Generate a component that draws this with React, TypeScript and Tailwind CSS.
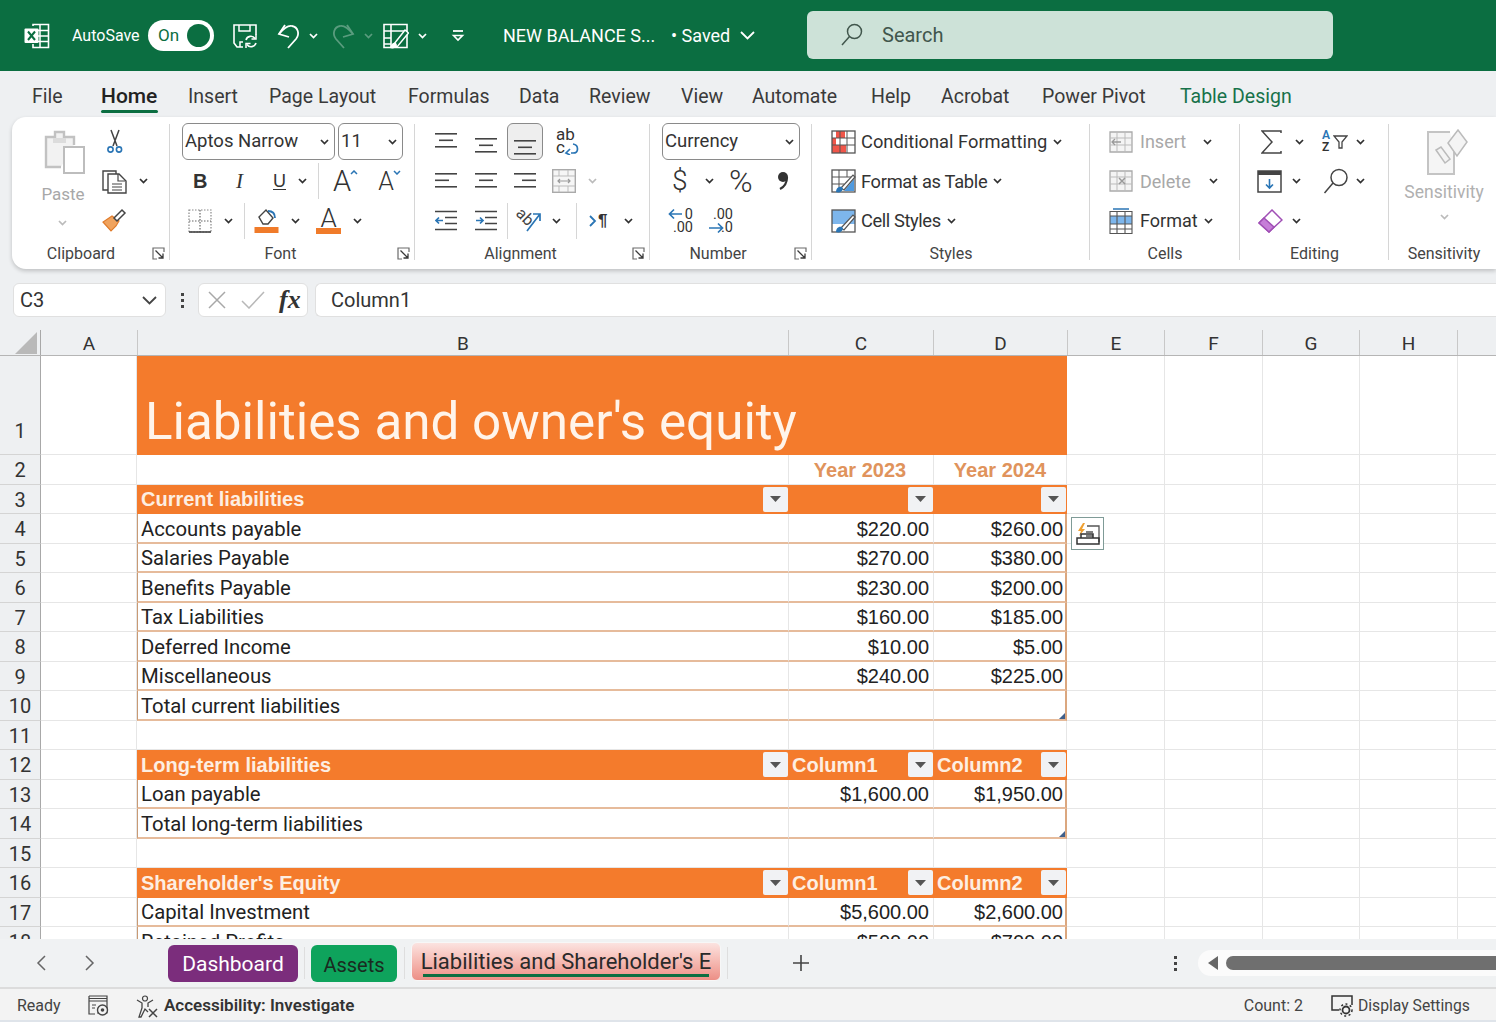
import React from "react";

type IconProps = { w: number; h: number; className?: string; children?: React.ReactNode };

const Ico = ({ w, h, className, children }: IconProps) => (
  <svg width={w} height={h} viewBox={`0 0 ${w} ${h}`} fill="none" className={`shrink-0 ${className ?? ""}`}>
    {children}
  </svg>
);

const Chev = ({ className, color = "#303030", w = 9 }: { className?: string; color?: string; w?: number }) => (
  <Ico w={w} h={6} className={className}>
    <path d={`M1 1 L${w / 2} 4.6 L${w - 1} 1`} stroke={color} strokeWidth="1.7" />
  </Ico>
);

const Launcher = ({ className }: { className?: string }) => (
  <Ico w={13} h={13} className={className}>
    <path d="M12 5V1H1v11h4" stroke="#6a6a6a" strokeWidth="1.2" />
    <path d="M3.5 3.5L11 11M11 6.5V11H6.5" stroke="#3a3a3a" strokeWidth="1.3" />
  </Ico>
);

const Lines = ({ widths }: { widths: number[][] }) => (
  <Ico w={23} h={16}>
    {widths.map(([x, w], i) => (
      <rect key={i} x={x} y={i * 6.5} width={w} height="1.6" fill="#444" />
    ))}
  </Ico>
);

const Group = ({ w, label, labelPad, launcher, children }: { w: string; label: string; labelPad?: string; launcher?: boolean; children: React.ReactNode }) => (
  <div className={`relative flex h-full shrink-0 flex-col ${w}`}>
    <div className="flex-1 pt-[5px]">{children}</div>
    <div className={`flex h-[29px] items-center justify-center pb-[2px] text-[16px] text-[#444] ${labelPad ?? ""}`}>{label}</div>
    {launcher && <Launcher className="absolute bottom-[9px] right-[5px]" />}
    <div className="absolute right-0 top-[7px] h-[136px] w-px bg-[#d6d6d6]" />
  </div>
);

const RRow = ({ className, children }: { className?: string; children: React.ReactNode }) => (
  <div className={`flex h-[39.5px] items-center ${className ?? ""}`}>{children}</div>
);

const Select = ({ className, children }: { className: string; children: React.ReactNode }) => (
  <div className={`flex h-[37px] items-center justify-between rounded-md border border-[#8a8a8a] bg-white pl-[2px] pr-[5px] text-[18.5px] text-[#333] ${className}`}>
    <span className="pt-[1px]">{children}</span>
    <Chev w={9} color="#333" />
  </div>
);

const VSep = ({ className }: { className?: string }) => <div className={`h-[36px] w-px bg-[#d6d6d6] ${className ?? ""}`} />;

const TitleBar = () => (
  <div className="flex h-[71px] shrink-0 items-center bg-[#0b6e41] text-white">
    <Ico w={26} h={26} className="ml-[24px]">
      <path d="M9 3V1.5h15.5v23H9V21" stroke="#fff" strokeWidth="1.6" />
      <path d="M16 1.5v23M14 7.5h10.5M14 13h10.5M14 18.5h10.5" stroke="#fff" strokeWidth="1.5" />
      <rect x="0.5" y="5.5" width="14" height="14.5" rx="1" fill="#fff" />
      <path d="M4 8.5l7 8.5M11 8.5l-7 8.5" stroke="#0b6e41" strokeWidth="2" />
    </Ico>
    <span className="ml-[22px] w-[67px] text-[16px]">AutoSave</span>
    <div className="ml-[9px] flex h-[31px] w-[66px] items-center justify-between rounded-full bg-white pl-[10px] pr-[4px] text-[17px] text-[#0b6e41]">
      On
      <span className="h-[23px] w-[23px] rounded-full bg-[#0b6e41]" />
    </div>
    <Ico w={26} h={26} className="ml-[18px]">
      <path d="M11 24H5L2 20V2h22v10" stroke="#fff" strokeWidth="1.6" />
      <path d="M7 2v6h11V2M8 24v-5h3" stroke="#fff" strokeWidth="1.5" />
      <path d="M14 17a5 5 0 0 1 9-1.5M24 20a5 5 0 0 1-9 1.5" stroke="#fff" strokeWidth="1.6" />
      <path d="M24 11.5v4.500h-4.500M14 25v-4.500h4.500" stroke="#fff" strokeWidth="1.5" />
    </Ico>
    <Ico w={24} h={26} className="ml-[19px]">
      <path d="M2 11C7 5 11 2 15 3c6 1 8 8 4 13l-8 9" stroke="#fff" strokeWidth="1.8" />
      <path d="M8 2L2 11l10 3" stroke="#fff" strokeWidth="1.8" />
    </Ico>
    <Chev className="ml-[8px]" color="#fff" />
    <Ico w={24} h={26} className="ml-[13px]">
      <path d="M22 11C17 5 13 2 9 3c-6 1-8 8-4 13l8 9" stroke="#5a9c7e" strokeWidth="1.8" />
      <path d="M16 2l6 9-10 3" stroke="#5a9c7e" strokeWidth="1.8" />
    </Ico>
    <Chev className="ml-[9px]" color="#5a9c7e" />
    <Ico w={26} h={26} className="ml-[10px]">
      <path d="M1 1.500h23v23H1zM1 8h23M8 1.500v23M1 15h7M1 21h7" stroke="#fff" strokeWidth="1.6" />
      <path d="M11 21L22 7l3.500 3L14 24z" fill="#0b6e41" stroke="#fff" strokeWidth="1.500" />
      <path d="M7 25c1-4 3-6 6-5l1 2c-1 3-4 4-7 3z" fill="#fff" />
    </Ico>
    <Chev className="ml-[9px]" color="#fff" />
    <Ico w={14} h={14} className="ml-[24px]">
      <path d="M2 2h10" stroke="#fff" strokeWidth="1.800" />
      <path d="M2.500 6.500L7 11l4.500-4.500z" stroke="#fff" strokeWidth="1.600" />
    </Ico>
    <span className="ml-[38px] w-[150px] whitespace-nowrap text-[18px]">NEW BALANCE S...</span>
    <span className="ml-[18px] w-[61px] whitespace-nowrap text-[18px]">• Saved</span>
    <Ico w={15} h={9} className="ml-[8px]">
      <path d="M1 1l6.500 6.500L14 1" stroke="#fff" strokeWidth="1.800" />
    </Ico>
    <div className="ml-[52px] -mt-[1px] flex h-[48px] w-[526px] items-center rounded-md bg-[#cde2d8] pl-[33px] text-[20px] text-[#41564c]">
      <Ico w={24} h={24}>
        <circle cx="14.500" cy="8.500" r="7" stroke="#41564c" strokeWidth="1.500" />
        <path d="M9.500 13.500L2 22" stroke="#41564c" strokeWidth="1.500" />
      </Ico>
      <span className="ml-[18px]">Search</span>
    </div>
  </div>
);

const tabs = [
  { t: "File", c: "ml-[32px] w-[31px]" },
  { t: "Home", c: "ml-[38px] w-[57px]" },
  { t: "Insert", c: "ml-[30px] w-[48px]" },
  { t: "Page Layout", c: "ml-[33px] w-[107px]" },
  { t: "Formulas", c: "ml-[32px] w-[82px]" },
  { t: "Data", c: "ml-[29px] w-[41px]" },
  { t: "Review", c: "ml-[29px] w-[61px]" },
  { t: "View", c: "ml-[31px] w-[41px]" },
  { t: "Automate", c: "ml-[30px] w-[89px]" },
  { t: "Help", c: "ml-[30px] w-[41px]" },
  { t: "Acrobat", c: "ml-[29px] w-[71px]" },
  { t: "Power Pivot", c: "ml-[30px] w-[104px]" },
  { t: "Table Design", c: "ml-[34px] w-[112px]" },
];

const TabBar = () => (
  <div className="flex h-[46px] shrink-0 items-center bg-[#eef0f2] pt-[5px] text-[19.5px] text-[#3a3a3a]">
    {tabs.map(({ t, c }) => (
      <span
        key={t}
        className={`${c} whitespace-nowrap ${t === "Home" ? "relative text-[21px] font-medium text-[#222]" : ""} ${t === "Table Design" ? "text-[#17724a]" : ""}`}
      >
        {t}
        {t === "Home" && <span className="absolute -bottom-[1px] left-0 right-0 h-[3px] rounded bg-[#0b6e41]" />}
      </span>
    ))}
  </div>
);

const Clipboard = () => (
  <Group w="w-[158px]" label="Clipboard" labelPad="pr-[20px]" launcher>
    <div className="flex">
      <div className="ml-[31px] flex w-[46px] flex-col items-center text-[17px] text-[#a8a8a8]">
        <Ico w={46} h={47} className="mt-[7px]">
          <path d="M18 38H3V8h9V3h9v5h10v8" fill="#f2f2f2" stroke="#c2c2c2" strokeWidth="2.400" />
          <rect x="21" y="18" width="20" height="26" fill="#fff" stroke="#bdbdbd" strokeWidth="2" />
          <rect x="10" y="9" width="13" height="5" fill="#dcdcdc" />
        </Ico>
        <span className="-ml-[6px] mt-[6px]">Paste</span>
        <Chev className="-ml-[8px] mt-[12px]" color="#bbb" w={9} />
      </div>
      <div className="ml-[13px] flex flex-col">
        <RRow className="pl-[4px]">
          <Ico w={18} h={25}>
            <path d="M5 1l6 16M13 1L7 17" stroke="#444" strokeWidth="1.500" />
            <circle cx="4.500" cy="20.500" r="2.600" stroke="#2a75b5" strokeWidth="1.600" />
            <circle cx="13" cy="20.500" r="2.600" stroke="#2a75b5" strokeWidth="1.600" />
          </Ico>
        </RRow>
        <RRow>
          <Ico w={26} h={25}>
            <path d="M6 21H1V2h13v3" stroke="#444" strokeWidth="1.400" />
            <path d="M6 5h11l7 7v12H6z" fill="#fff" stroke="#444" strokeWidth="1.400" />
            <path d="M16 5v7h7M10 15h10M10 18h10M10 21h10" stroke="#444" strokeWidth="1.200" />
          </Ico>
          <Chev className="ml-[11px]" />
        </RRow>
        <RRow>
          <Ico w={25} h={25} className="mt-[-2px]">
            <path d="M1 15l8 9 5-5 3-5-7-5z" fill="#f0a35e" stroke="#e07b2a" strokeWidth="1.200" />
            <path d="M12 11l8-8 3 3-8 8z" fill="#fff" stroke="#444" strokeWidth="1.500" />
          </Ico>
        </RRow>
      </div>
    </div>
  </Group>
);

const Font = () => (
  <Group w="w-[245px]" label="Font" labelPad="pr-[24px]" launcher>
    <RRow className="pl-[12px]">
      <Select className="w-[153px]">Aptos Narrow</Select>
      <Select className="ml-[3px] w-[65px]">11</Select>
    </RRow>
    <RRow className="text-[#333]">
      <span className="ml-[23px] w-[14px] font-['Liberation_Sans'] text-[20px] font-bold">B</span>
      <span className="ml-[29px] w-[10px] font-['Liberation_Serif'] text-[21px] italic">I</span>
      <span className="relative ml-[27px] w-[14px] font-['Liberation_Sans'] text-[18px] underline underline-offset-2">U</span>
      <Chev className="ml-[11px]" />
      <VSep className="ml-[11px]" />
      <span className="relative ml-[14px] text-[29px] font-light leading-none">
        A
        <Ico w={8} h={5} className="absolute right-[-7px] top-[3px]">
          <path d="M1 4l3-3 3 3" stroke="#2a75b5" strokeWidth="1.500" />
        </Ico>
      </span>
      <span className="relative ml-[27px] text-[25px] font-light leading-none">
        A
        <Ico w={8} h={5} className="absolute right-[-7px] top-[1px]">
          <path d="M1 1l3 3 3-3" stroke="#2a75b5" strokeWidth="1.500" />
        </Ico>
      </span>
    </RRow>
    <RRow>
      <Ico w={24} h={24} className="ml-[18px]">
        <path d="M1 1h22v22H1z" stroke="#888" strokeWidth="1.200" strokeDasharray="1.500 1.500" />
        <path d="M12 1v22M1 12h22" stroke="#666" strokeWidth="1.200" strokeDasharray="1.500 1.500" />
        <path d="M1 23h22" stroke="#444" strokeWidth="1.600" />
      </Ico>
      <Chev className="ml-[12px]" />
      <VSep className="ml-[11px]" />
      <Ico w={25} h={26} className="ml-[9px]">
        <path d="M5 9l7-7 7 8-5 6H9z" fill="#fff" stroke="#444" strokeWidth="1.400" />
        <path d="M14 3c5 0 7 3 7 7" stroke="#2a75b5" strokeWidth="1.800" />
        <rect x="0.500" y="19" width="24" height="6" fill="#f07b2a" />
      </Ico>
      <Chev className="ml-[12px]" />
      <div className="relative ml-[16px] flex h-[26px] w-[25px] justify-center text-[26px] font-light leading-[20px] text-[#333]">
        A
        <span className="absolute bottom-0 left-0 h-[6px] w-full bg-[#f07b2a]" />
      </div>
      <Chev className="ml-[12px]" />
    </RRow>
  </Group>
);

const Alignment = () => (
  <Group w="w-[235px]" label="Alignment" labelPad="pr-[24px]" launcher>
    <RRow>
      <div className="ml-[20px] mt-[-2px]">
        <Lines widths={[[0, 22], [4, 14], [0, 22]]} />
      </div>
      <div className="ml-[17px] mt-[8px]">
        <Lines widths={[[0, 22], [4, 14], [0, 22]]} />
      </div>
      <div className="ml-[9px] flex h-[37px] w-[36px] items-center justify-center rounded-md border border-[#8a8a8a] bg-[#eeeeee] pt-[12px]">
        <Lines widths={[[0, 22], [4, 14], [0, 22]]} />
      </div>
      <div className="relative ml-[13px] h-[28px] w-[22px] text-[17px] leading-[13px] text-[#333]">
        <span className="block">ab</span>
        <span className="block">c</span>
        <Ico w={15} h={13} className="absolute bottom-[1px] right-[-1px]">
          <path d="M7 11h2c6 0 6-8 0-9" stroke="#2a75b5" strokeWidth="1.700" />
          <path d="M6 7l-4 4 4 2" stroke="#2a75b5" strokeWidth="1.700" />
        </Ico>
      </div>
    </RRow>
    <RRow>
      <div className="ml-[20px]">
        <Lines widths={[[0, 22], [0, 14], [0, 22]]} />
      </div>
      <div className="ml-[17px]">
        <Lines widths={[[0, 22], [4, 14], [0, 22]]} />
      </div>
      <div className="ml-[16px]">
        <Lines widths={[[0, 22], [8, 14], [0, 22]]} />
      </div>
      <Ico w={24} h={24} className="ml-[15px]">
        <rect x="0.700" y="0.700" width="22.600" height="22.600" stroke="#aaa" strokeWidth="1.400" fill="#f6f6f6" />
        <path d="M1 7h22M1 17h22M7 1v6M16 1v6M7 17v6M16 17v6" stroke="#bbb" />
        <path d="M6 12h12M8 10l-2 2 2 2M16 10l2 2-2 2" stroke="#999" strokeWidth="1.200" />
      </Ico>
      <Chev className="ml-[12px]" color="#bbb" />
    </RRow>
    <RRow>
      <Ico w={23} h={21} className="ml-[20px]">
        <path d="M0 1.500h22M10 7.500h12M10 13.500h12M0 19.500h22" stroke="#444" strokeWidth="1.600" />
        <path d="M8 10.500H1M4 7.500l-3 3 3 3" stroke="#2a75b5" strokeWidth="1.700" />
      </Ico>
      <Ico w={23} h={21} className="ml-[17px]">
        <path d="M0 1.500h22M10 7.500h12M10 13.500h12M0 19.500h22" stroke="#444" strokeWidth="1.600" />
        <path d="M1 10.500h7M5 7.500l3 3-3 3" stroke="#2a75b5" strokeWidth="1.700" />
      </Ico>
      <VSep className="ml-[9px]" />
      <div className="relative ml-[9px] h-[26px] w-[26px]">
        <span className="absolute left-[-1px] top-[1px] origin-center rotate-[45deg] text-[16px] leading-none text-[#444]">ab</span>
        <Ico w={26} h={26} className="absolute left-0 top-0">
          <path d="M10 23L23 6M16 6h7v7" stroke="#2a75b5" strokeWidth="1.700" />
        </Ico>
      </div>
      <Chev className="ml-[9px]" />
      <VSep className="ml-[15px]" />
      <Ico w={8} h={12} className="ml-[12px]">
        <path d="M1 1l5 5-5 5" stroke="#2a75b5" strokeWidth="1.800" />
      </Ico>
      <span className="ml-[1px] w-[11px] font-['Liberation_Sans'] text-[17px] font-bold leading-none text-[#333]">¶</span>
      <Chev className="ml-[15px]" />
    </RRow>
  </Group>
);

const NumberGroup = () => (
  <Group w="w-[162px]" label="Number" labelPad="pr-[26px]" launcher>
    <RRow className="pl-[12px]">
      <Select className="w-[138px]">Currency</Select>
    </RRow>
    <RRow className="text-[#333]">
      <span className="ml-[22px] w-[15px] text-[28px] font-light leading-none">$</span>
      <Chev className="ml-[18px]" />
      <span className="ml-[15px] w-[24px] text-[32px] font-light leading-none">%</span>
      <Ico w={12} h={20} className="ml-[24px]">
        <circle cx="6" cy="6" r="5" fill="#333" />
        <path d="M10 6c0 6-3 10-7 12" stroke="#333" strokeWidth="2.200" />
      </Ico>
    </RRow>
    <RRow className="text-[14.5px] leading-[13px] text-[#333]">
      <div className="relative ml-[18px] h-[26px] w-[25px] text-right">
        <span className="block">0</span>
        <span className="block">.00</span>
        <Ico w={15} h={12} className="absolute left-0 top-0">
          <path d="M14 6H2M6 1.500L1.500 6 6 10.500" stroke="#2a75b5" strokeWidth="1.700" />
        </Ico>
      </div>
      <div className="relative ml-[15px] h-[26px] w-[25px] text-right">
        <span className="block">.00</span>
        <span className="block">.0</span>
        <Ico w={16} h={12} className="absolute bottom-0 left-0">
          <path d="M1 6h13M10 1.500L14.500 6 10 10.500" stroke="#2a75b5" strokeWidth="1.700" />
        </Ico>
      </div>
    </RRow>
  </Group>
);

const StyleIcon = ({ kind }: { kind: "cf" | "table" | "cell" }) => (
  <Ico w={25} h={24}>
    {kind === "cf" && (
      <>
        <rect x="5" y="1" width="9" height="7" fill="#f0564a" />
        <rect x="1" y="15" width="14" height="8" fill="#f0564a" />
        <rect x="1" y="8" width="4" height="7" fill="#f0564a" />
      </>
    )}
    {kind === "table" && <path d="M13 22l10-12v12z" fill="#4f9ae0" />}
    {kind === "cell" && <rect x="1" y="1" width="23" height="14" fill="#7db6ec" />}
    <rect x="1" y="1" width="23" height="22" stroke="#555" strokeWidth="1.300" />
    {kind === "cf" && <path d="M1 8h23M1 15h23M9 1v22M16 1v22" stroke="#555" strokeWidth="1" />}
    {kind === "table" && <path d="M1 8h23M1 15h12M8 1v18M16 1v7" stroke="#555" strokeWidth="1" />}
    {kind !== "cf" && (
      <>
        <path d="M10 19L22 6l2 2-11 13z" fill="#fff" stroke="#555" strokeWidth="1.200" />
        <path d="M5 23c0-3 2-6 6-5l1 2c-1 3-4 4-7 3z" fill="#2a75b5" />
      </>
    )}
  </Ico>
);

const Styles = () => (
  <Group w="w-[278px]" label="Styles">
    <div className="pl-[19px] text-[18.3px] text-[#333]">
      <RRow>
        <StyleIcon kind="cf" />
        <span className="ml-[5px] whitespace-nowrap">Conditional Formatting</span>
        <Chev className="ml-[6px]" />
      </RRow>
      <RRow>
        <StyleIcon kind="table" />
        <span className="ml-[5px] whitespace-nowrap tracking-[-0.3px]">Format as Table</span>
        <Chev className="ml-[6px]" />
      </RRow>
      <RRow>
        <StyleIcon kind="cell" />
        <span className="ml-[5px] whitespace-nowrap tracking-[-0.4px]">Cell Styles</span>
        <Chev className="ml-[6px]" />
      </RRow>
    </div>
  </Group>
);

const Cells = () => (
  <Group w="w-[150px]" label="Cells">
    <div className="pl-[19px] text-[18px]">
      <RRow className="text-[#a8a8a8]">
        <Ico w={24} h={22}>
          <path d="M1 1h22v20H1z" fill="#f4f4f4" stroke="#aaa" strokeWidth="1.300" />
          <path d="M1 7h22M1 14h22M8 1v20M16 1v20" stroke="#bbb" />
          <path d="M12 11H3M6 8l-3 3 3 3" stroke="#999" strokeWidth="1.300" />
        </Ico>
        <span className="ml-[7px] w-[50px]">Insert</span>
        <Chev className="ml-[13px]" />
      </RRow>
      <RRow className="text-[#a8a8a8]">
        <Ico w={24} h={22}>
          <path d="M1 1h22v20H1z" fill="#f4f4f4" stroke="#aaa" strokeWidth="1.300" />
          <path d="M1 7h22M1 14h22M8 1v20M16 1v20" stroke="#bbb" />
          <path d="M10 8l6 6M16 8l-6 6" stroke="#999" strokeWidth="1.500" />
        </Ico>
        <span className="ml-[7px] w-[56px]">Delete</span>
        <Chev className="ml-[13px]" />
      </RRow>
      <RRow className="text-[#333]">
        <Ico w={24} h={26}>
          <rect x="1" y="8" width="22" height="8" fill="#7db6ec" />
          <path d="M1 3.500h22v22H1zM1 8h22M1 16h22M1 21h22M8 3.500v22M16 3.500v22" stroke="#555" strokeWidth="1.100" />
          <path d="M4 1h16" stroke="#2a75b5" strokeWidth="1.500" />
        </Ico>
        <span className="ml-[7px]">Format</span>
        <Chev className="ml-[6px]" />
      </RRow>
    </div>
  </Group>
);

const Editing = () => (
  <Group w="w-[149px]" label="Editing">
    <RRow>
      <Ico w={21} h={24} className="ml-[21px]">
        <path d="M20 3V1H1l10 11L1 23h19v-2" stroke="#444" strokeWidth="1.500" />
      </Ico>
      <Chev className="ml-[13px]" />
      <div className="relative ml-[18px] h-[26px] w-[26px] text-[12px] font-semibold leading-[12px]">
        <span className="block text-[#2a75b5]">A</span>
        <span className="block text-[#333]">Z</span>
        <Ico w={15} h={14} className="absolute right-0 top-[6px]">
          <path d="M1 1h13L9 7v6H6V7z" stroke="#444" strokeWidth="1.300" />
        </Ico>
      </div>
      <Chev className="ml-[8px]" />
    </RRow>
    <RRow>
      <Ico w={25} h={23} className="ml-[17px]">
        <rect x="1" y="1" width="23" height="21" stroke="#444" strokeWidth="1.500" />
        <rect x="1" y="1" width="23" height="4" fill="#444" />
        <path d="M12.500 9v9M9 14.500l3.500 3.500 3.500-3.500" stroke="#2a75b5" strokeWidth="1.600" />
      </Ico>
      <Chev className="ml-[10px]" />
      <Ico w={26} h={26} className="ml-[22px]">
        <circle cx="16" cy="9.500" r="8" stroke="#444" strokeWidth="1.500" />
        <path d="M10 15L1.500 25" stroke="#444" strokeWidth="1.500" />
      </Ico>
      <Chev className="ml-[7px]" />
    </RRow>
    <RRow>
      <Ico w={25} h={24} className="ml-[18px]">
        <path d="M1 14L14 1l10 10-13 12z" fill="#fff" stroke="#a04fb5" strokeWidth="1.500" />
        <path d="M1 14l5-5 10 9-5 5z" fill="#c67ed8" stroke="#a04fb5" strokeWidth="1.500" />
      </Ico>
      <Chev className="ml-[9px]" />
    </RRow>
  </Group>
);

const Sensitivity = () => (
  <div className="relative flex h-full flex-1 flex-col">
    <div className="flex flex-1 flex-col items-center pt-[11px] text-[17.5px] text-[#b0b0b0]">
      <Ico w={43} h={50} className="ml-[10px]">
        <path d="M24 4H2v42h26V24" stroke="#c4c4c4" strokeWidth="2" fill="#f5f5f5" />
        <path d="M10 22l9 13 5-4-9-12zM22 15l9 13 10-14-9-12z" fill="#f4f4f4" stroke="#bbb" strokeWidth="1.500" />
      </Ico>
      <span className="ml-[3px] mt-[1px]">Sensitivity</span>
      <Chev className="ml-[3px] mt-[9px]" color="#bbb" />
    </div>
    <div className="ml-[3px] flex h-[29px] items-center justify-center pb-[2px] text-[16px] text-[#444]">Sensitivity</div>
  </div>
);

const Ribbon = () => (
  <div className="h-[166px] shrink-0 bg-[#eef0f2] pl-[12px]">
    <div className="flex h-[152px] rounded-l-[14px] bg-white shadow-[0_2px_4px_rgba(0,0,0,0.2)]">
      <Clipboard />
      <Font />
      <Alignment />
      <NumberGroup />
      <Styles />
      <Cells />
      <Editing />
      <Sensitivity />
    </div>
  </div>
);

const FormulaBar = () => (
  <div className="flex h-[47px] shrink-0 bg-[#eef0f2] pl-[13px] text-[20px] text-[#333]">
    <div className="flex h-[34px] w-[153px] items-center justify-between rounded-md border border-[#e0e0e0] bg-white pl-[6px] pr-[8px]">
      C3
      <Ico w={15} h={9}>
        <path d="M1 1l6.500 6.500L14 1" stroke="#444" strokeWidth="1.800" />
      </Ico>
    </div>
    <div className="flex h-[34px] w-[32px] flex-col items-center justify-center gap-[3px]">
      <span className="h-[3px] w-[3px] bg-[#444]" />
      <span className="h-[3px] w-[3px] bg-[#444]" />
      <span className="h-[3px] w-[3px] bg-[#444]" />
    </div>
    <div className="flex h-[34px] w-[110px] items-center rounded-md border border-[#e0e0e0] bg-white pl-[9px]">
      <Ico w={18} h={18}>
        <path d="M1 1l16 16M17 1L1 17" stroke="#a8a8a8" strokeWidth="1.500" />
      </Ico>
      <Ico w={24} h={18} className="ml-[15px]">
        <path d="M1 10l7 7L23 1" stroke="#b8b8b8" strokeWidth="1.500" />
      </Ico>
      <span className="ml-[14px] font-['Liberation_Serif'] text-[26px] font-bold italic leading-none">fx</span>
    </div>
    <div className="ml-[7px] flex h-[34px] flex-1 items-center rounded-l-md border border-r-0 border-[#e0e0e0] bg-white pl-[15px]">
      Column1
    </div>
  </div>
);

const colCls = [
  { l: "A", c: "w-[97px]" },
  { l: "B", c: "w-[651px]" },
  { l: "C", c: "w-[145px]" },
  { l: "D", c: "w-[134px]" },
  { l: "E", c: "w-[97px]" },
  { l: "F", c: "w-[98px]" },
  { l: "G", c: "w-[97px]" },
  { l: "H", c: "w-[98px]" },
  { l: "", c: "w-[39px]" },
];

const bodyCols = ["w-[98px]", "w-[98px]", "w-[97px]", "w-[98px]", "w-[39px]"];

const ColHeader = () => (
  <div className="flex h-[26px] shrink-0 border-b border-[#b5b5b5] bg-[#eef0f2] text-[19px] text-[#333]">
    <div className="flex w-[41px] shrink-0 items-end justify-end border-r border-[#a8a8a8] pb-[1px] pr-[3px]">
      <Ico w={22} h={22}>
        <path d="M22 0v22H0z" fill="#b9b9b9" />
      </Ico>
    </div>
    {colCls.map(({ l, c }) => (
      <div key={c + l} className={`flex shrink-0 items-center justify-center border-r border-[#c8c8c8] pt-[3px] ${c}`}>
        {l}
      </div>
    ))}
  </div>
);

type RowData = { n: number; k: "title" | "year" | "head" | "blank" | "body"; b?: string; c?: string; d?: string; end?: boolean; names?: boolean };

const rows: RowData[] = [
  { n: 1, k: "title" },
  { n: 2, k: "year" },
  { n: 3, k: "head", b: "Current liabilities" },
  { n: 4, k: "body", b: "Accounts payable", c: "$220.00", d: "$260.00" },
  { n: 5, k: "body", b: "Salaries Payable", c: "$270.00", d: "$380.00" },
  { n: 6, k: "body", b: "Benefits Payable", c: "$230.00", d: "$200.00" },
  { n: 7, k: "body", b: "Tax Liabilities", c: "$160.00", d: "$185.00" },
  { n: 8, k: "body", b: "Deferred Income", c: "$10.00", d: "$5.00" },
  { n: 9, k: "body", b: "Miscellaneous", c: "$240.00", d: "$225.00" },
  { n: 10, k: "body", b: "Total current liabilities", end: true },
  { n: 11, k: "blank" },
  { n: 12, k: "head", b: "Long-term liabilities", names: true },
  { n: 13, k: "body", b: "Loan payable", c: "$1,600.00", d: "$1,950.00" },
  { n: 14, k: "body", b: "Total long-term liabilities", end: true },
  { n: 15, k: "blank" },
  { n: 16, k: "head", b: "Shareholder's Equity", names: true },
  { n: 17, k: "body", b: "Capital Investment", c: "$5,600.00", d: "$2,600.00" },
  { n: 18, k: "body", b: "Retained Profits", c: "$500.00", d: "$700.00" },
];

const Filter = () => (
  <div className="flex h-[25px] w-[25px] shrink-0 items-center justify-center rounded-[2px] bg-[#f1f2f4]">
    <Ico w={11} h={6}>
      <path d="M0 0h11L5.500 6z" fill="#555" />
    </Ico>
  </div>
);

const HeadCell = ({ text, className }: { text?: string; className: string }) => (
  <div className={`flex items-center justify-between bg-[#f47b2c] pr-[1px] font-['Liberation_Sans'] text-[20px] font-bold text-[#fdeee2] ${className}`}>
    <span>{text}</span>
    <Filter />
  </div>
);

const GRID = "border-b border-r border-[#e6e6e6]";
const TBODY = "border-b-2 border-[#e6bb9b]";

const Row = ({ r }: { r: RowData }) => {
  const isTitle = r.k === "title";
  return (
    <div className={`flex shrink-0 ${isTitle ? "h-[99px]" : "h-[29.5px]"}`}>
      <div className={`flex w-[41px] shrink-0 justify-center border-b border-r border-b-[#d4d4d4] border-r-[#a8a8a8] bg-[#eef0f2] pt-[2px] text-[20px] text-[#333] ${isTitle ? "items-end pb-[8px]" : "items-center"}`}>
        {r.n}
      </div>
      <div className={`w-[96px] shrink-0 ${GRID}`} />
      {isTitle && (
        <div className="flex w-[930px] shrink-0 items-center bg-[#f47b2c] pl-[8px] pt-[32px] text-[51.2px] leading-[1.4] text-[#fff4ea]">
          Liabilities and owner's equity
        </div>
      )}
      {r.k === "year" && (
        <>
          <div className={`w-[652px] shrink-0 ${GRID}`} />
          <div className={`flex w-[145px] shrink-0 items-center justify-center pr-[2px] pt-[2px] font-['Liberation_Sans'] text-[20px] font-bold text-[#e0935c] ${GRID}`}>Year 2023</div>
          <div className={`flex w-[133px] shrink-0 items-center justify-center pt-[2px] font-['Liberation_Sans'] text-[20px] font-bold text-[#e0935c] ${GRID}`}>Year 2024</div>
        </>
      )}
      {r.k === "head" && (
        <>
          <HeadCell text={r.b} className="w-[652px] shrink-0 pl-[4px]" />
          <HeadCell text={r.names ? "Column1" : ""} className="w-[145px] shrink-0 pl-[3px]" />
          <HeadCell text={r.names ? "Column2" : ""} className="w-[133px] shrink-0 pl-[3px]" />
        </>
      )}
      {r.k === "blank" && (
        <>
          <div className={`w-[652px] shrink-0 ${GRID}`} />
          <div className={`w-[145px] shrink-0 ${GRID}`} />
          <div className={`w-[133px] shrink-0 ${GRID}`} />
        </>
      )}
      {r.k === "body" && (
        <>
          <div className={`flex w-[652px] shrink-0 items-center border-l border-r border-l-[#c99a74] border-r-[#e6e6e6] pl-[3px] pt-[2px] text-[20.3px] text-[#222] ${TBODY}`}>{r.b}</div>
          <div className={`flex w-[145px] shrink-0 items-center justify-end border-r border-r-[#e6e6e6] pr-[4px] pt-[2px] font-['Liberation_Sans'] text-[20px] text-[#222] ${TBODY}`}>{r.c}</div>
          <div className={`relative flex w-[133px] shrink-0 items-center justify-end border-r-2 border-r-[#dba77f] pr-[2px] pt-[2px] font-['Liberation_Sans'] text-[20px] text-[#222] ${TBODY}`}>
            {r.d}
            {r.end && (
              <Ico w={6} h={6} className="absolute bottom-0 right-0">
                <path d="M6 0v6H0z" fill="#3f5f8a" />
              </Ico>
            )}
          </div>
        </>
      )}
      {bodyCols.map((c, i) => (
        <div key={i} className={`shrink-0 ${c} ${GRID}`} />
      ))}
    </div>
  );
};

const SmartTag = () => (
  <div className="absolute left-[1071px] top-[161px] flex h-[33px] w-[33px] items-center justify-center border border-[#7f9b97] bg-white">
    <Ico w={26} h={24}>
      <path d="M8 1L3 9h3l-2 5 6-7H7l3-6z" fill="#f0a030" />
      <path d="M12 4h12v16M11 10h7M11 14h7" stroke="#555" strokeWidth="1.300" />
      <path d="M2 16h22v6H2zM6 16v-4h12v4" stroke="#333" strokeWidth="1.500" />
    </Ico>
  </div>
);

const Sheet = () => (
  <div className="relative min-h-0 flex-1 overflow-hidden bg-white">
    {rows.map((r) => (
      <Row key={r.n} r={r} />
    ))}
    <SmartTag />
  </div>
);

const TabSep = ({ className }: { className: string }) => <div className={`h-[32px] w-px bg-[#dedede] ${className}`} />;

const SheetTabs = () => (
  <div className="flex h-[50px] shrink-0 items-center border-b-2 border-[#dcdcdc] bg-[#f0f2f3] text-[22px]">
    <Ico w={10} h={16} className="ml-[36px]">
      <path d="M9 1L2 8l7 7" stroke="#666" strokeWidth="1.500" />
    </Ico>
    <Ico w={10} h={16} className="ml-[39px]">
      <path d="M1 1l7 7-7 7" stroke="#666" strokeWidth="1.500" />
    </Ico>
    <div className="ml-[73px] flex h-[37px] w-[130px] items-center justify-center rounded-md bg-[#7b2d7c] pt-[4px] text-[21px] text-white">Dashboard</div>
    <TabSep className="ml-[6px]" />
    <div className="ml-[6px] flex h-[37px] w-[86px] items-center justify-center rounded-md bg-[#0ea35c] pt-[3px] text-[20px] text-[#1a2a20]">Assets</div>
    <TabSep className="ml-[7px]" />
    <div className="relative ml-[6px] mt-[-3px] flex h-[39px] w-[310px] items-start justify-center whitespace-nowrap rounded-md border border-[#f7f7f7] bg-gradient-to-b from-[#fbe3e0] to-[#ec8f86] pt-[2px] text-[#2a2a2a]">
      Liabilities and Shareholder's E
      <span className="absolute bottom-[3px] left-[11px] right-[11px] h-[3px] bg-[#0b6e41]" />
    </div>
    <TabSep className="ml-[6px]" />
    <Ico w={16} h={16} className="ml-[65px]">
      <path d="M8 0v16M0 8h16" stroke="#444" strokeWidth="1.600" />
    </Ico>
    <div className="ml-[365px] flex flex-col gap-[3px]">
      <span className="h-[3px] w-[3px] bg-[#444]" />
      <span className="h-[3px] w-[3px] bg-[#444]" />
      <span className="h-[3px] w-[3px] bg-[#444]" />
    </div>
    <div className="ml-[21px] flex h-[26px] flex-1 items-center rounded-l-full bg-[#fbfbfb] pl-[10px]">
      <Ico w={10} h={14}>
        <path d="M10 0v14L0 7z" fill="#666" />
      </Ico>
      <div className="ml-[8px] h-[14px] flex-1 rounded-l-full bg-[#6f6f6f]" />
    </div>
  </div>
);

const StatusBar = () => (
  <div className="flex h-[33px] shrink-0 items-center border-b-2 border-[#dfe4ea] bg-[#f3f3f3] pt-[3px] text-[16px] text-[#444]">
    <span className="ml-[17px] w-[44px]">Ready</span>
    <Ico w={22} h={22} className="ml-[27px]">
      <path d="M1 1h18v17H9M1 1v18h6M1 6h18M1 3.500h18M4 10h4M4 13h3" stroke="#444" strokeWidth="1.200" />
      <circle cx="14.500" cy="15" r="5" fill="#f3f3f3" stroke="#444" strokeWidth="1.400" />
      <circle cx="14.500" cy="15" r="1.800" fill="#444" />
    </Ico>
    <Ico w={23} h={23} className="ml-[26px]">
      <circle cx="9" cy="3.500" r="2.500" stroke="#444" strokeWidth="1.200" />
      <path d="M1 5l5 3v5l-3 9h2l4-8 3 3M17 5l-5 3v4" stroke="#444" strokeWidth="1.300" />
      <path d="M13 14l8 8M21 14l-8 8" stroke="#444" strokeWidth="1.500" />
    </Ico>
    <span className="ml-[5px] text-[17px] font-semibold text-[#333]">Accessibility: Investigate</span>
    <span className="ml-auto">Count: 2</span>
    <Ico w={23} h={23} className="ml-[28px]">
      <path d="M8 15H1V1h20v9" stroke="#333" strokeWidth="1.500" />
      <circle cx="15" cy="15" r="3.500" stroke="#333" strokeWidth="1.800" />
      <circle cx="15" cy="15" r="6" stroke="#333" strokeWidth="1.500" strokeDasharray="2 2.500" />
    </Ico>
    <span className="ml-[4px] mr-[26px] w-[112px] whitespace-nowrap text-[15.7px]">Display Settings</span>
  </div>
);

export default function App() {
  return (
    <div className="flex h-[1022px] w-[1496px] flex-col overflow-hidden bg-white font-['Roboto','Liberation_Sans',sans-serif]">
      <TitleBar />
      <TabBar />
      <Ribbon />
      <FormulaBar />
      <ColHeader />
      <Sheet />
      <SheetTabs />
      <StatusBar />
    </div>
  );
}
